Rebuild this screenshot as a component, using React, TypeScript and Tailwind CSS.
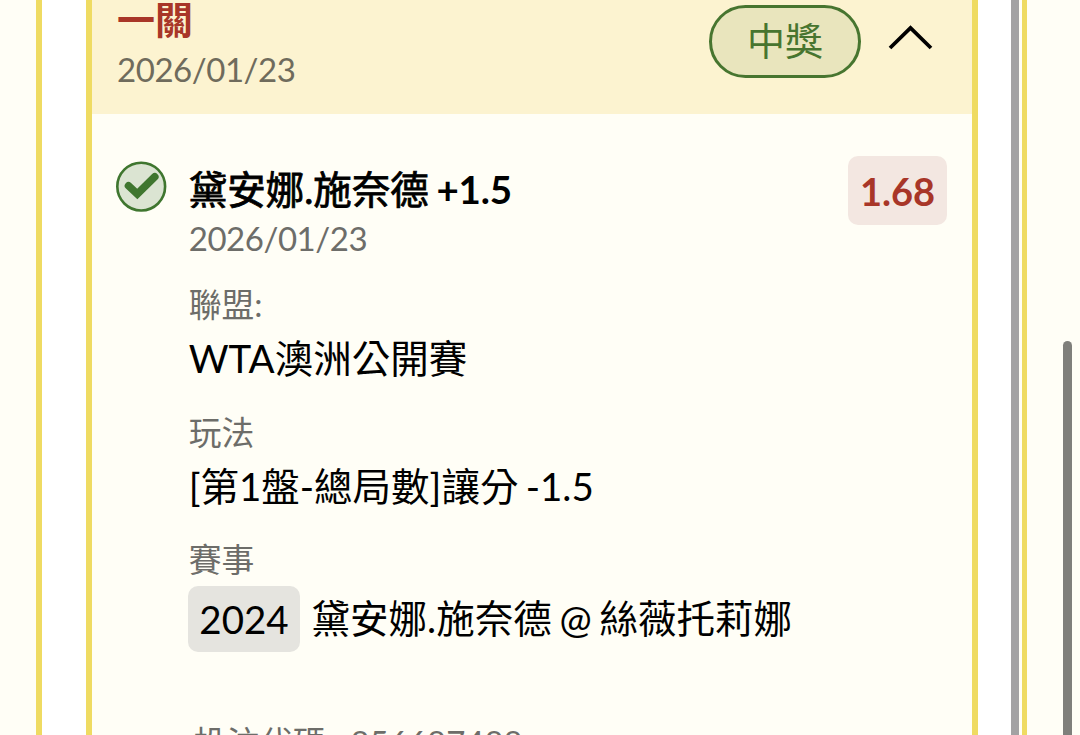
import type { ReactNode } from "react";

function CheckBadge() {
  return (
    <svg className="mt-[11px] h-[52px] w-[52px] shrink-0" viewBox="0 0 52 52" fill="none">
      <circle cx="26.2" cy="25.6" r="23.9" fill="#dbe4d2" stroke="#3f762f" strokeWidth="2.6" />
      <path d="M13.5 24.8 L22.3 33 L39.8 15.8" stroke="#3f762f" strokeWidth="7.6" strokeLinecap="round" />
    </svg>
  );
}

function Field({ label, children }: { label: string; children: ReactNode }) {
  return (
    <div className="h-[127.5px]">
      <div className="h-[44px] text-[32.8px] leading-[42px] text-[#6d6d69]">{label}</div>
      <div className="flex h-[62px] items-center text-[38.5px] [word-spacing:-2.5px] whitespace-pre">{children}</div>
    </div>
  );
}

export default function App() {
  return (
    <div className="flex h-[735px] w-[1080px] overflow-hidden bg-[#fffef6] font-['Lato','Noto_Sans_CJK_TC',sans-serif] text-black">
      <div className="ml-9 flex w-[991px] border-r-[5px] border-l-[6px] border-[#efdb62]">
        <div className="flex flex-1 bg-white pl-11">
          <main className="flex w-[892px] flex-col border-r-[6px] border-l-[6px] border-[#efdb62] bg-[#fffef6]">
            <header className="flex h-[114px] shrink-0 justify-between bg-[#fcf3d0] pr-[39.5px] pl-[25px]">
              <div>
                <div className="h-[44px] text-[38px] leading-[39px] font-bold text-[#a83628]">一關</div>
                <div className="text-[33px] leading-[50px] tracking-[-0.45px] text-[#6f6b5c]">2026/01/23</div>
              </div>
              <div className="flex pt-[5px]">
                <div className="flex h-[73px] w-[152px] items-center justify-center rounded-full border-[3px] border-[#47752f] bg-[#e9e5bd] pb-[3px] text-[38px] leading-none text-[#47752f]">
                  中獎
                </div>
                <svg className="mt-[17px] ml-[25.5px] h-[30px] w-[46px]" viewBox="0 0 46 30" fill="none">
                  <path d="M3 26 L23.5 6 L44 26" stroke="#000" strokeWidth="3.8" />
                </svg>
              </div>
            </header>
            <section className="flex pt-[36px] pr-[25px] pl-[23px]">
              <CheckBadge />
              <div className="ml-[21.7px] flex-1">
                <div className="flex h-[69px] justify-between">
                  <h1 className="text-[38.5px] leading-[78px] font-normal [word-spacing:-1.5px] whitespace-pre">
                    <span className="[-webkit-text-stroke:0.8px_black]">黛安娜.施奈德</span>
                    <span className="font-bold tracking-[-0.2px]"> +1.5</span>
                  </h1>
                  <div className="mt-[6px] h-[69px] w-[99px] rounded-[10px] bg-[#f3e7e1] text-center text-[38px] leading-[71px] font-bold text-[#a83628]">
                    1.68
                  </div>
                </div>
                <div className="h-[65px] text-[33px] leading-[38px] tracking-[-0.45px] text-[#6d6d69]">2026/01/23</div>
                <Field label="聯盟:">WTA澳洲公開賽</Field>
                <Field label="玩法">[第1盤-總局數]讓分 -1.5</Field>
                <Field label="賽事">
                  <span className="mt-[10px] mr-[11.6px] -ml-[0.7px] flex h-[66px] w-[112px] items-center justify-center rounded-[10px] bg-[#e5e4df] pt-[1px]">
                    2024
                  </span>
                  <span className="mt-[10px] [word-spacing:-2px]">黛安娜.施奈德 @ 絲薇托莉娜</span>
                </Field>
                <div className="mt-[55.5px] flex gap-[16.5px] pl-[5px] text-[33px] leading-[40px] text-[#6d6d69]">
                  <span>投注代碼:</span>
                  <span>856687488</span>
                </div>
              </div>
            </section>
          </main>
          <div className="ml-[33px] w-[8px] bg-[#a3a2a3]" />
          <div className="flex-1 bg-[#fffef6]" />
        </div>
      </div>
      <div className="mt-[341px] ml-[36px] w-[9px] rounded-t-full bg-[#7f7f7b]" />
    </div>
  );
}
